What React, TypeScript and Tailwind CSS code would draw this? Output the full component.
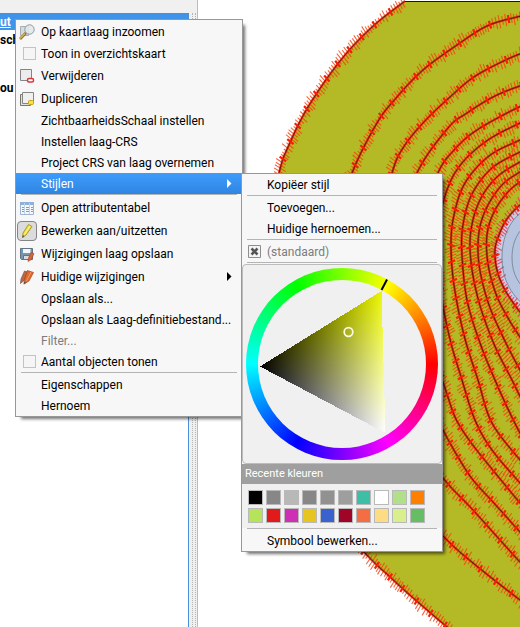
import type { ReactNode } from "react";

type Point = [number, number];

const CONTOURS: Point[][] = [
  [[405, 1], [372, 27], [340, 61], [308, 107], [288, 147], [279, 173], [262, 250], [262, 340], [285, 430], [325, 505], [365, 553], [390, 577], [412, 597], [447, 627], [475, 650]],
  [[530, 15], [517, 17], [487, 26], [457, 45], [423, 70], [397, 97], [377, 123], [352, 173], [335, 230], [333, 320], [360, 420], [400, 490], [445, 538], [473, 563], [520, 600], [530, 606]],
  [[530, 53], [517, 55], [477, 75], [450, 97], [423, 123], [403, 148], [392, 173], [375, 240], [375, 330], [400, 420], [443, 478], [473, 510], [520, 562], [530, 570]],
  [[530, 84], [517, 87], [493, 97], [467, 113], [448, 128], [417, 173], [402, 230], [402, 320], [420, 385], [443, 430], [458, 457], [473, 480], [493, 502], [520, 532], [530, 542]],
  [[530, 105], [517, 108], [477, 130], [455, 149], [438, 173], [425, 220], [423, 280], [431, 345], [445, 388], [455, 417], [467, 437], [483, 458], [520, 503], [530, 514]],
  [[530, 119], [520, 123], [488, 140], [462, 163], [447, 190], [438, 230], [439, 280], [449, 335], [462, 380], [475, 420], [492, 450], [520, 483], [530, 494]],
  [[530, 136], [520, 140], [489, 156], [465, 183], [454, 215], [451, 245], [454, 285], [464, 335], [478, 380], [492, 423], [520, 460], [530, 471]],
  [[530, 148], [520, 152], [492, 168], [472, 194], [463, 225], [462, 255], [467, 300], [480, 343], [495, 380], [508, 409], [520, 433], [530, 449]],
  [[530, 158], [520, 162], [497, 177], [480, 200], [471, 230], [471, 262], [479, 302], [494, 344], [512, 380], [522, 400], [530, 413]],
  [[530, 168], [520, 172], [502, 185], [487, 207], [479, 232], [479, 264], [488, 302], [503, 337], [520, 370], [530, 386]],
  [[530, 178], [520, 182], [507, 193], [494, 212], [487, 235], [488, 264], [496, 294], [508, 318], [520, 337], [530, 351]],
  [[530, 200], [520, 205], [507, 219], [499, 235], [495, 250], [497, 270], [505, 290], [520, 312], [530, 323]],
];

function smooth(points: Point[]): Point[] {
  const out: Point[] = [];
  for (let i = 0; i < points.length - 1; i++) {
    const a = points[Math.max(0, i - 1)];
    const b = points[i];
    const c = points[i + 1];
    const d = points[Math.min(points.length - 1, i + 2)];
    const steps = Math.max(4, Math.round(Math.hypot(c[0] - b[0], c[1] - b[1])));
    for (let s = 0; s < steps; s++) {
      const t = s / steps;
      const at = (k: 0 | 1) =>
        0.5 *
        (2 * b[k] +
          (c[k] - a[k]) * t +
          (2 * a[k] - 5 * b[k] + 4 * c[k] - d[k]) * t * t +
          (3 * b[k] - a[k] - 3 * c[k] + d[k]) * t * t * t);
      out.push([at(0), at(1)]);
    }
  }
  out.push(points[points.length - 1]);
  return out;
}

function toPath(points: Point[]) {
  return "M" + points.map((p) => p[0].toFixed(1) + " " + p[1].toFixed(1)).join("L");
}

/* Hachure strokes across a contour: thin ones every few pixels, with heavier ones in between. */
function hachures(points: Point[], seed: number) {
  let thin = "";
  let bold = "";
  let travelled = 0;
  let count = seed;
  for (let i = 1; i < points.length; i++) {
    const dx = points[i][0] - points[i - 1][0];
    const dy = points[i][1] - points[i - 1][1];
    const len = Math.hypot(dx, dy) || 1;
    travelled += len;
    if (travelled < 2.6) continue;
    travelled = 0;
    count++;
    const noise = Math.abs(Math.sin(count * 12.9898 + seed * 78.233) * 43758.5453) % 1;
    let nx = -dy / len;
    let ny = dx / len;
    if (ny < 0) {
      nx = -nx;
      ny = -ny;
    }
    ny += 0.35;
    const n = Math.hypot(nx, ny);
    const heavy = count % 6 === 0;
    const before = heavy ? 4 : 3 + noise * 5;
    const after = heavy ? 4 : 3 + ((noise * 7) % 1) * 5;
    const [x, y] = points[i];
    const stroke =
      "M" + (x - (nx / n) * before).toFixed(1) + " " + (y - (ny / n) * before).toFixed(1) +
      "L" + (x + (nx / n) * after).toFixed(1) + " " + (y + (ny / n) * after).toFixed(1);
    if (heavy) bold += stroke;
    else thin += stroke;
  }
  return { thin, bold };
}

const LINES = CONTOURS.map((c, i) => {
  const points = smooth(c);
  return { path: toPath(points), ...hachures(points, i * 5) };
});

function MapCanvas() {
  return (
    <svg className="block h-full w-full" viewBox="198 0 322 627" preserveAspectRatio="xMinYMin slice" aria-hidden="true">
      <path d={LINES[0].path + "L560 650L560 1Z"} fill="#b3ba25" />
      <path d="M405 1.5H560" stroke="#1a1a08" />
      <path d={LINES[11].path + "L560 323L560 200Z"} fill="#c9cce4" />
      <path d="M530 207C509 217 502 238 502 258C502 280 512 297 530 310Z" fill="#b7c4df" stroke="#7a8ea0" />
      <path d="M530 222C516 231 512 245 512 258C512 274 519 286 530 293" fill="none" stroke="#7a8ea0" />
      {LINES.map((line, i) => (
        <g key={i} fill="none">
          <path d={line.thin} stroke={i === 11 ? "#ef2a48" : "#f4400c"} strokeOpacity="0.8" strokeWidth="1.1" />
          <path d={line.path} stroke="#f01a06" strokeWidth="2.4" strokeOpacity="0.75" />
          <path d={line.path} stroke="#4a0d08" strokeWidth="1" strokeOpacity="0.9" />
          <path d={line.bold} stroke="#f81c04" strokeWidth="2.2" />
        </g>
      ))}
    </svg>
  );
}

function ZoomIcon() {
  return (
    <svg width="16" height="16" viewBox="0 0 16 16" fill="none">
      <path d="M1.5 2.5h8v9h-8z" fill="#d5dce0" stroke="#a5afb3" />
      <circle cx="10.5" cy="5.5" r="4.7" fill="#e2e8ea" fillOpacity=".9" stroke="#8e9a9e" />
      <path d="M6.800 9L1 15" stroke="#8a6a28" strokeWidth="2.600" />
      <path d="M6 9.500L1 14.500" stroke="#e0b85a" strokeWidth="1.200" />
    </svg>
  );
}

function RemoveIcon() {
  return (
    <svg width="16" height="16" viewBox="0 0 16 16" fill="none">
      <path d="M1.500 1.500h11v11h-11z" fill="#ececec" stroke="#858585" />
      <rect x="8.500" y="10.500" width="6" height="3.500" rx="1.500" fill="#fff" stroke="#d93642" strokeWidth="1.500" />
    </svg>
  );
}

function DuplicateIcon() {
  return (
    <svg width="16" height="16" viewBox="0 0 16 16" fill="none">
      <path d="M1.500 3.500h10v11h-10z" fill="#e0e0de" stroke="#77776f" />
      <path d="M3.500 1.500h11v11h-11z" fill="#f0f0f0" stroke="#858585" />
      <rect x="9.500" y="9.500" width="5" height="4" rx="1" fill="#f4e23e" stroke="#c5a51d" />
    </svg>
  );
}

function TableIcon() {
  return (
    <svg width="16" height="16" viewBox="0 0 16 16" fill="none">
      <path d="M1.500 2.500h13v12h-13z" fill="#f4f8fc" stroke="#9db5d2" />
      <path d="M1 2h14v3H1z" fill="#8fb0d8" />
      <path d="M5.500 3v11M10.500 3v11" stroke="#c1d3e8" />
      <path d="M3 7.500h2M7 7.500h3M12 7.500h2M3 9.500h2M7 9.500h3M12 9.500h2M3 11.500h2M7 11.500h3M12 11.500h2" stroke="#7f9cc0" />
    </svg>
  );
}

function PencilIcon() {
  return (
    <span className="flex size-5 items-center justify-center rounded-sm border border-[#858585] bg-[#dcdcdc]">
      <svg width="16" height="16" viewBox="0 0 16 16" fill="none">
        <path d="M9.500 1.500L13 3.500L7 12L3.500 14.500L4 10z" fill="#f0df43" stroke="#a79a35" />
        <path d="M11 3L5.500 11.500" stroke="#fbf6a5" />
        <path d="M3 15l1-3 1.500 1.500z" fill="#555" />
      </svg>
    </span>
  );
}

function SaveIcon() {
  return (
    <svg width="16" height="16" viewBox="0 0 16 16" fill="none">
      <path d="M1.500 2.500h12v11h-11l-1-1z" fill="#7895ae" stroke="#5f7485" />
      <path d="M4 3h7.500v4H4z" fill="#f3f5f6" />
      <path d="M4.500 9.500h6v4h-6z" fill="#d6dbdf" stroke="#66747e" />
      <path d="M12 6.500l3 1-2.500 6-3.500 2 .5-3.500z" fill="#d8633a" stroke="#a8451f" strokeWidth=".6" />
    </svg>
  );
}

function PencilsIcon() {
  return (
    <svg width="16" height="16" viewBox="0 0 16 16" fill="none">
      <path d="M5.500 2L9 3 5 11.500 1.500 14.500 2 10z" fill="#b9694a" stroke="#84533e" strokeWidth=".7" />
      <path d="M8.500 1.500l6 2L10 12l-5 3 .5-5z" fill="#e0672f" stroke="#a14720" strokeWidth=".7" />
      <path d="M12 3L7.500 12" stroke="#f49a66" />
      <path d="M4.500 15.500l1-3 1.500 1.500z" fill="#555" />
    </svg>
  );
}

function CheckedIcon() {
  return (
    <svg className="ml-1 shrink-0" width="14" height="14" viewBox="0 0 14 14" fill="none">
      <path d="M.5 .5h12v12H.5z" fill="#f4f4f4" stroke="#8d8d8d" />
      <path d="M3.500 3.500l6 6M9.500 3.500l-6 6" stroke="#555" strokeWidth="2.600" />
    </svg>
  );
}

const ROW = "flex w-full items-center text-left whitespace-nowrap";

function Item({ icon, label, className = "h-[21px]", arrow }: { icon?: ReactNode; label: string; className?: string; arrow?: boolean }) {
  return (
    <button type="button" className={`${ROW} ${className}`}>
      <span className="flex w-[25px] shrink-0 justify-center pr-1">{icon}</span>
      <span className="flex-1">{label}</span>
      {arrow && (
        <svg className="mr-2.5" width="5" height="9" viewBox="0 0 5 9" fill="currentColor">
          <path d="M0 0l4.500 4.500L0 9z" />
        </svg>
      )}
    </button>
  );
}

function CheckItem({ label }: { label: string }) {
  return (
    <label className={`${ROW} h-[21px]`}>
      <span className="flex w-[25px] shrink-0 justify-end pr-[5px]">
        <input type="checkbox" className="size-[13px] appearance-none border border-[#c3c3c3] bg-[#f5f5f5]" />
      </span>
      {label}
    </label>
  );
}

function Separator() {
  return <div role="separator" className="mx-[5px] mb-px h-px bg-[#b4b4b4]" />;
}

function ColorWheel() {
  return (
    <div className="flex justify-center rounded-sm border border-[#bcbcbc] bg-[#f0f0f0] pt-[3px] pb-[3px]">
      <div className="relative size-48">
        <div className="size-48 rounded-full bg-[conic-gradient(from_90deg,#f00,#f0f,#00f,#0ff,#0f0,#ff0,#f00)] p-3">
          <div className="size-full rounded-full bg-[#f0f0f0]" />
        </div>
        <svg className="absolute inset-0 isolate" width="192" height="192" viewBox="0 0 192 192" fill="none">
          <defs>
            <linearGradient id="hue" gradientUnits="userSpaceOnUse" x1="77.6" y1="132.2" x2="135.5" y2="23">
              <stop stopColor="#000" />
              <stop offset="1" stopColor="#eaf500" />
            </linearGradient>
            <linearGradient id="white" gradientUnits="userSpaceOnUse" x1="74.7" y1="60.8" x2="139.5" y2="165">
              <stop stopColor="#000" />
              <stop offset="1" stopColor="#fff" />
            </linearGradient>
          </defs>
          <g shapeRendering="crispEdges">
            <path d="M14 98.500L139.500 165L135.500 23z" fill="url(#hue)" />
            <path className="mix-blend-plus-lighter" d="M14 98.500L139.500 165L135.500 23z" fill="url(#white)" />
          </g>
          <path d="M141 11.500L135.500 22" stroke="#000" strokeWidth="2" />
          <circle cx="102.500" cy="64" r="4.300" stroke="#fffde0" strokeWidth="1.700" />
        </svg>
      </div>
    </div>
  );
}

const SWATCHES = [
  ["#000000", "#878787", "#b8b8b8", "#878787", "#919191", "#9e9e9e", "#3cbfa4", "#ffffff", "#b2df8a", "#ff7f00"],
  ["#b5e35a", "#e31a1c", "#cf2fb5", "#e8c41e", "#3a62cf", "#a00426", "#f46d43", "#fedc84", "#d9ef8b", "#66bd63"],
];

const MENU = "absolute border border-[#979797] bg-[#f7f7f7] shadow-[4px_4px_3px_-2px_rgba(0,0,0,0.55)]";

export default function App() {
  return (
    <div className="relative flex h-screen overflow-hidden bg-white font-['Roboto','Noto_Sans',sans-serif] text-xs text-black">
      <aside className="flex w-[198px] shrink-0 flex-col border-r border-[#bdbdbd] bg-[#f0f0f0]">
        <div className="h-[13px] shrink-0" />
        <div className="flex flex-1">
          <div className="flex-1 border-t border-r border-[#4a90d8] bg-white font-bold">
            <div className="h-4 bg-[#3f93e8] leading-4 text-white underline">ut</div>
            <div className="h-5 leading-5">sch</div>
            <div className="h-7" />
            <div className="h-5 leading-5">ou</div>
          </div>
          <div className="ml-[3px] w-1 border-x border-dotted border-[#b5b5b5]" />
          <div className="w-px" />
        </div>
      </aside>
      <main className="min-w-0 flex-1">
        <MapCanvas />
      </main>

      <nav className={`${MENU} top-[19px] left-[15px] w-[228px]`}>
        <Item icon={<ZoomIcon />} label="Op kaartlaag inzoomen" className="h-[23px]" />
        <CheckItem label="Toon in overzichtskaart" />
        <Item icon={<RemoveIcon />} label="Verwijderen" className="h-[23px]" />
        <Item icon={<DuplicateIcon />} label="Dupliceren" className="h-[23px]" />
        <Item label="ZichtbaarheidsSchaal instellen" />
        <Item label="Instellen laag-CRS" />
        <Item label="Project CRS van laag overnemen" />
        <Item label="Stijlen" arrow className="h-[21px] bg-linear-to-b from-[#3f9cfb] to-[#2f85e2] text-white" />
        <Separator />
        <Item icon={<TableIcon />} label="Open attributentabel" className="h-[23px]" />
        <Item icon={<PencilIcon />} label="Bewerken aan/uitzetten" className="h-[23px]" />
        <Item icon={<SaveIcon />} label="Wijzigingen laag opslaan" className="h-[23px]" />
        <Item icon={<PencilsIcon />} label="Huidige wijzigingen" arrow className="h-[23px]" />
        <Item label="Opslaan als..." />
        <Item label="Opslaan als Laag-definitiebestand..." />
        <Item label="Filter..." className="h-[21px] text-[#7c7c7c]" />
        <CheckItem label="Aantal objecten tonen" />
        <Separator />
        <Item label="Eigenschappen" />
        <Item label="Hernoem" />
      </nav>

      <nav className={`${MENU} top-[173px] left-[241px] w-[202px]`}>
        <Item label="Kopiëer stijl" />
        <Separator />
        <Item label="Toevoegen..." />
        <Item label="Huidige hernoemen..." />
        <Separator />
        <Item icon={<CheckedIcon />} label="(standaard)" className="h-[21px] text-[#7c7c7c]" />
        <Separator />
        <ColorWheel />
        <h2 className="h-5 bg-[#9f9f9f] pl-[3px] text-[11px] leading-5 text-white">Recente kleuren</h2>
        <div className="flex flex-col gap-[3px] bg-[#f0f0f0] px-1.5 pt-1.5 pb-[5px]">
          {SWATCHES.map((row, r) => (
            <div key={r} className="flex gap-[3px]">
              {row.map((color, i) => (
                <button key={i} type="button" aria-label={color} className="size-[15px] border border-[#b9b9b9]" style={{ backgroundColor: color }} />
              ))}
            </div>
          ))}
        </div>
        <Separator />
        <Item label="Symbool bewerken..." />
      </nav>
    </div>
  );
}
